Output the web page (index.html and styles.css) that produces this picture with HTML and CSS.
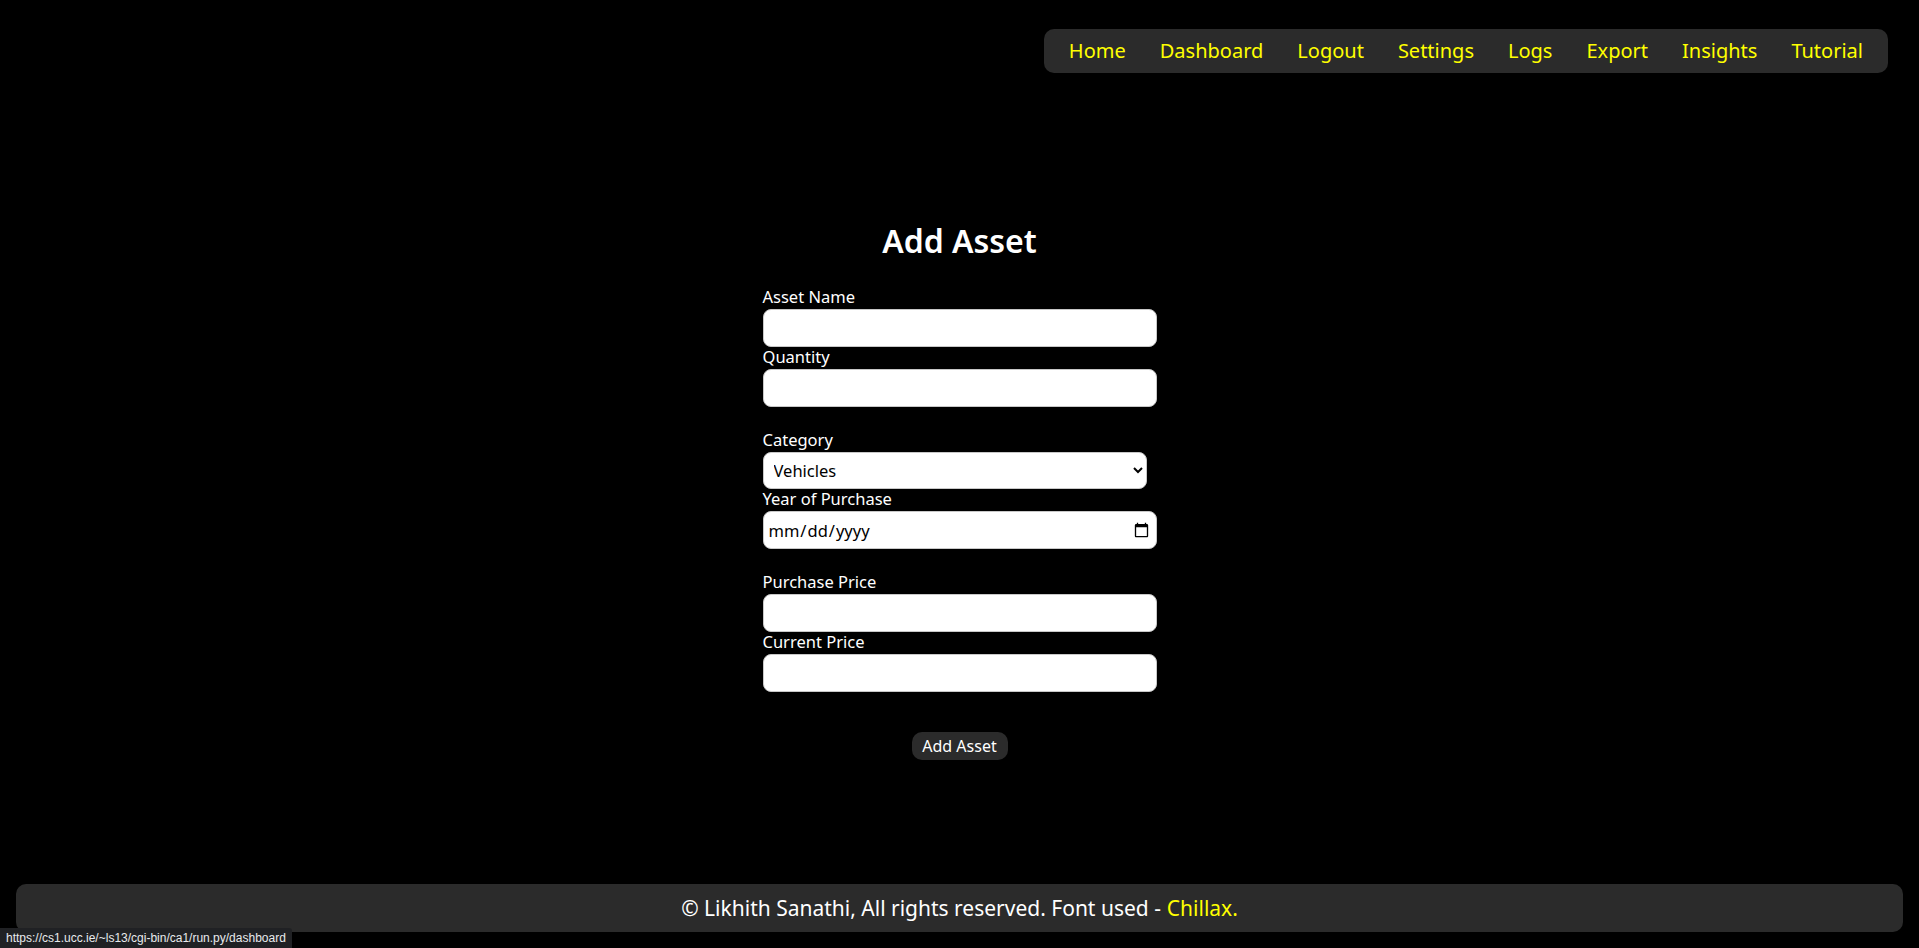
FILE: index.html
```html
<!DOCTYPE html>
<html lang="en">
<head>
<meta charset="utf-8">
<title>Add Asset</title>
<link rel="stylesheet" href="styles.css">
</head>
<body>
<div class="page">
  <header class="top">
    <nav class="nav">
      <a href="#">Home</a>
      <a href="#">Dashboard</a>
      <a href="#">Logout</a>
      <a href="#">Settings</a>
      <a href="#">Logs</a>
      <a href="#">Export</a>
      <a href="#">Insights</a>
      <a href="#">Tutorial</a>
    </nav>
  </header>
  <main class="main">
    <h1 class="title">Add Asset</h1>
    <form class="form">
      <label class="lbl" for="name">Asset Name</label>
      <input class="field" id="name" type="text">
      <label class="lbl" for="qty">Quantity</label>
      <input class="field" id="qty" type="number">
      <label class="lbl spaced" for="cat">Category</label>
      <select class="field sel" id="cat">
        <option>Vehicles</option>
        <option>Electronics</option>
        <option>Property</option>
      </select>
      <label class="lbl" for="year">Year of Purchase</label>
      <input class="field date" id="year" type="date">
      <label class="lbl spaced" for="pp">Purchase Price</label>
      <input class="field" id="pp" type="number">
      <label class="lbl" for="cp">Current Price</label>
      <input class="field" id="cp" type="number">
      <button class="btn" type="button">Add Asset</button>
    </form>
  </main>
  <footer class="footer">© Likhith Sanathi, All rights reserved. Font used - <span class="hl">Chillax.</span></footer>
</div>
<div class="status">https://cs1.ucc.ie/~ls13/cgi-bin/ca1/run.py/dashboard</div>
</body>
</html>
```

FILE: styles.css
```css
html, body {
  margin: 0;
  padding: 0;
  background: #000;
}
body {
  font-family: "Noto Sans", "Open Sans", sans-serif;
  color: #fff;
}
.page {
  min-height: 948px;
  display: flex;
  flex-direction: column;
}
.top {
  display: flex;
  justify-content: flex-end;
  padding: 29px 31px 0 0;
}
.nav {
  display: flex;
  align-items: center;
  gap: 34px;
  height: 44px;
  padding: 0 25px;
  background: #2b2b2b;
  border-radius: 10px;
}
.nav a {
  color: #ffff00;
  text-decoration: none;
  font-size: 20px;
  line-height: 24px;
}
.main {
  display: flex;
  flex-direction: column;
  align-items: center;
  padding-top: 148px;
}
.title {
  margin: 0;
  font-size: 32px;
  line-height: 40px;
  font-weight: 600;
}
.form {
  width: 394px;
  display: flex;
  flex-direction: column;
  align-items: flex-start;
  margin-top: 26px;
}
.lbl {
  display: block;
  font-size: 16.5px;
  line-height: 20px;
  height: 20px;
  margin-bottom: 2px;
}
.lbl.spaced {
  margin-top: 23px;
}
.field {
  box-sizing: border-box;
  width: 394px;
  height: 38px;
  margin: 0;
  border: 1px solid #c8c8c8;
  border-radius: 8px;
  background: #fff;
  font-family: "Noto Sans", sans-serif;
  font-size: 16.5px;
  color: #000;
  padding: 0 6px;
}
.sel {
  width: 384px;
  height: 37px;
  padding: 0 6px;
}
.date {
  height: 38px;
  padding: 0 4px;
}
.btn {
  align-self: center;
  margin-top: 40px;
  width: 96px;
  height: 28px;
  border: none;
  border-radius: 10px;
  background: #2b2b2b;
  color: #fff;
  font-family: "Noto Sans", sans-serif;
  font-size: 16px;
  padding: 0;
}
.footer {
  margin: auto 16px 16px;
  height: 48px;
  display: flex;
  align-items: center;
  justify-content: center;
  background: #2b2b2b;
  border-radius: 10px;
  font-size: 21px;
  color: #fff;
}
.hl {
  color: #ffff00;
  margin-left: 0.28em;
}
.status {
  position: fixed;
  left: 0;
  bottom: 0;
  height: 20px;
  padding: 0 6px;
  background: #202124;
  color: #e8eaed;
  font-family: "Liberation Sans", sans-serif;
  font-size: 12px;
  line-height: 20px;
  border-top-right-radius: 3px;
}
```
